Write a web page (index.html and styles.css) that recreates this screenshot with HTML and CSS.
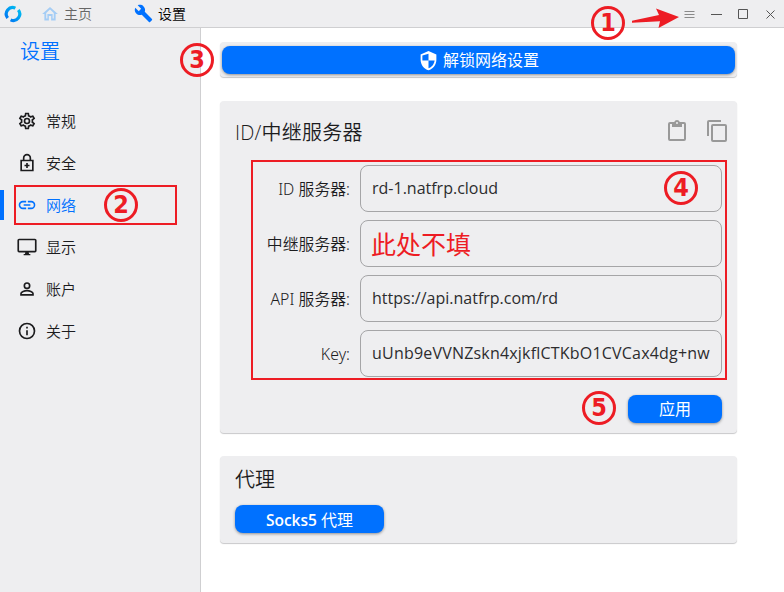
FILE: index.html
```html
<!DOCTYPE html>
<html lang="zh-CN">
<head>
<meta charset="utf-8">
<title>设置</title>
<link rel="stylesheet" href="styles.css">
</head>
<body>
<div class="window">
  <header class="titlebar">
    <svg class="logo" width="18" height="18" viewBox="0 0 18 18" fill="none" stroke-width="3.2">
      <defs><linearGradient id="lg" x1="1" y1="0" x2="0" y2="1"><stop offset="0" stop-color="#00c4f0"/><stop offset="1" stop-color="#0070f4"/></linearGradient></defs>
      <path d="M3.7 12.9A6.4 6.4 0 0 1 11.4 3.1M14.3 5.1A6.4 6.4 0 0 1 6.6 14.9" stroke="url(#lg)"/>
    </svg>
    <div class="tab home">
      <svg width="18" height="18" viewBox="0 0 24 24" fill="#a5cdf5"><path fill-rule="evenodd" d="M12 2.500 1.500 12h3v8.500h6v-6h3v6h6V12h3zM12 6l5 4.500V18h-1.500v-6h-7v6H7v-7.500z"/></svg>
      <span>主页</span>
    </div>
    <div class="tab active">
      <svg width="19" height="19" viewBox="0 0 24 24" fill="#0071ff"><path d="M22.700 19l-9.100-9.100c.9-2.300.4-5-1.500-6.900-2-2-5-2.400-7.400-1.300L9 6 6 9 1.600 4.700C.4 7.100.9 10.100 2.900 12.100c1.900 1.900 4.600 2.400 6.900 1.500l9.100 9.100c.4.4 1 .4 1.400 0l2.300-2.300c.5-.4.5-1.100.1-1.400z"/></svg>
      <span>设置</span>
    </div>
    <svg class="controls" width="100" height="27" viewBox="0 0 100 27" fill="none" stroke="#555">
      <path stroke="#8a8a8a" d="M4.500 11.500h10M4.500 14.500h10M4.500 17.500h10"/>
      <path d="M31 14.500h11M58.500 9.500h9v9h-9z"/>
      <path d="M86.500 10.500l8 8M94.500 10.500l-8 8"/>
    </svg>
  </header>
  <div class="body">
    <nav class="sidebar">
      <h1>设置</h1>
      <a><svg width="20" height="20" viewBox="0 0 24 24"><path d="M19.430 12.980c.04-.32.07-.64.07-.98s-.03-.66-.07-.98l2.110-1.650c.19-.15.24-.42.12-.64l-2-3.460a.5.5 0 0 0-.61-.22l-2.490 1c-.52-.4-1.080-.73-1.690-.98l-.38-2.650A.49.49 0 0 0 14 2h-4c-.25 0-.46.18-.49.42l-.38 2.650c-.61.25-1.170.59-1.690.98l-2.490-1a.5.5 0 0 0-.61.22l-2 3.460c-.13.22-.07.49.12.64l2.110 1.650c-.04.32-.07.65-.07.98s.03.66.07.98l-2.110 1.650c-.19.15-.24.42-.12.64l2 3.460c.12.220.390.290.610.220l2.490-1c.52.4 1.080.73 1.690.98l.38 2.650c.03.24.24.42.49.42h4c.25 0 .46-.18.49-.42l.38-2.650c.61-.25 1.170-.59 1.690-.98l2.490 1c.22.070.490 0 .610-.220l2-3.460c.12-.22.07-.49-.12-.64zM17.450 11.270c.04.31.05.52.05.73s-.02.43-.05.73l-.14 1.130.89.7 1.080.84-.7 1.210-1.270-.51-1.040-.42-.9.68c-.43.32-.84.56-1.250.73l-1.060.43-.16 1.130-.2 1.350h-1.400l-.35-2.480-1.060-.43c-.43-.18-.83-.41-1.230-.71l-.91-.7-1.060.43-1.270.51-.7-1.210 1.970-1.540-.14-1.130c-.03-.31-.05-.54-.05-.74s.02-.43.05-.73l.14-1.130L4.720 8.600l.7-1.210 1.270.51 1.040.42.9-.68c.43-.32.84-.56 1.250-.73l1.060-.43.16-1.130.2-1.350h1.390l.35 2.480 1.060.43c.43.18.83.41 1.230.71l.91.7 1.060-.43 1.270-.51.7 1.210-1.960 1.550zM12 8a4 4 0 1 0 0 8 4 4 0 0 0 0-8zm0 6a2 2 0 1 1 0-4 2 2 0 0 1 0 4z" fill-rule="evenodd"/></svg><span>常规</span></a>
      <a><svg class="line" width="20" height="20" viewBox="0 0 24 24"><path d="M5 9h14v12H5zM8 9V6a4 4 0 0 1 8 0v3M12 12v6M9 15h6"/></svg><span>安全</span></a>
      <a class="selected"><svg width="20" height="20" viewBox="0 0 24 24"><path d="M3.900 12c0-1.710 1.390-3.100 3.100-3.100h4V7H7a5 5 0 0 0 0 10h4v-1.900H7c-1.710 0-3.100-1.390-3.100-3.100zM8 13h8v-2H8zm9-6h-4v1.900h4a3.100 3.100 0 0 1 0 6.200h-4V17h4a5 5 0 0 0 0-10z"/></svg><span>网络</span></a>
      <a><svg width="20" height="20" viewBox="0 0 24 24"><path fill-rule="evenodd" d="M21.500 2h-19A2 2 0 0 0 .5 4v12.500a2 2 0 0 0 2 2H10l-.5 2H8V22h8v-1.500h-1.500l-.5-2h7.500a2 2 0 0 0 2-2V4a2 2 0 0 0-2-2zm0 14.500h-19V4h19z"/></svg><span>显示</span></a>
      <a><svg class="line" width="20" height="20" viewBox="0 0 24 24"><circle cx="12" cy="8" r="3.200"/><path d="M4.800 19v-1.600c0-2 4.300-3.400 7.200-3.400s7.200 1.400 7.200 3.400V19z"/></svg><span>账户</span></a>
      <a><svg class="line" width="20" height="20" viewBox="0 0 24 24"><circle cx="12" cy="12" r="9"/><path d="M12 11v6M12 7v2"/></svg><span>关于</span></a>
    </nav>
    <main class="content">
      <section class="card unlock">
        <button class="wide"><svg width="21" height="21" viewBox="0 0 24 24" fill="#fff"><path fill-rule="evenodd" d="M12 1 3 5v6c0 5.550 3.840 10.740 9 12 5.160-1.260 9-6.450 9-12V5zm0 3.200V12h7c-.53 4.100-3.300 7.800-7 8.900V12H5V6.300z"/></svg><span>解锁网络设置</span></button>
      </section>
      <section class="card server">
        <div class="head">
          <h2>ID/中继服务器</h2>
          <svg width="24" height="26" viewBox="0 0 24 24" fill="#999"><path fill-rule="evenodd" d="M19 3h-4.200a3 3 0 0 0-5.600 0H5a2 2 0 0 0-2 2v15a2 2 0 0 0 2 2h14a2 2 0 0 0 2-2V5a2 2 0 0 0-2-2zm0 17H5V5h2v3h10V5h2zM12 3a1 1 0 1 1 0 2 1 1 0 0 1 0-2z"/></svg>
          <svg width="24" height="24" viewBox="0 0 24 24" fill="#999"><path fill-rule="evenodd" d="M16 1H4a2 2 0 0 0-2 2v14h2V3h12zM20 5H8a2 2 0 0 0-2 2v14a2 2 0 0 0 2 2h12a2 2 0 0 0 2-2V7a2 2 0 0 0-2-2zm0 16H8V7h12z"/></svg>
        </div>
        <div class="form">
          <div class="row"><label>ID 服务器:</label><div class="field">rd-1.natfrp.cloud</div></div>
          <div class="row"><label>中继服务器:</label><div class="field note">此处不填</div></div>
          <div class="row"><label>API 服务器:</label><div class="field">https://api.natfrp.com/rd</div></div>
          <div class="row"><label>Key:</label><div class="field key">uUnb9eVVNZskn4xjkflCTKbO1CVCax4dg+nw</div></div>
        </div>
        <button class="apply">应用</button>
      </section>
      <section class="card proxy">
        <h2>代理</h2>
        <button class="socks"><span><b>Socks5</b> 代理</span></button>
      </section>
    </main>
  </div>
  <div class="menu-mark"></div>
  <svg class="arrow" width="48" height="22" viewBox="0 0 48 22"><path fill="#ed1c24" d="M0 12.800 27 7l-3-6.500L47 9 26.500 20l1.500-6.700L0 14.800z"/></svg>
  <b class="step s1">1</b><b class="step s2">2</b><b class="step s3">3</b><b class="step s4">4</b><b class="step s5">5</b>
</div>
</body>
</html>
```

FILE: styles.css
```css
* { box-sizing: border-box; }
body { margin: 0; font: 350 15px/20px "Open Sans", "Noto Sans CJK SC", sans-serif; color: #1c1c1e; }
h1, h2 { margin: 0; font-weight: 350; font-size: 20px; line-height: 28px; }
.window { position: relative; width: 784px; height: 592px; display: flex; flex-direction: column; overflow: hidden; background: #fff; }
.titlebar { height: 28px; flex: none; display: flex; align-items: center; background: #eeeef0; border-bottom: 1px solid #cfcfd1; font-size: 14px; }
.logo { margin-left: 4px; }
.tab { display: flex; align-items: center; }
.home { margin-left: 19px; width: 93px; gap: 5px; color: #666; }
.active { gap: 5px; color: #000; }
.controls { margin-left: auto; margin-right: 4px; }
.body { flex: 1; display: flex; }
.sidebar { width: 201px; background: #eeeef0; border-right: 1px solid #cfcfd1; }
.sidebar h1 { margin: 10px 0 34px 20px; color: #0071ff; }
.sidebar a { height: 42px; display: flex; align-items: center; gap: 9px; padding-left: 17px; }
.sidebar svg { fill: #1c1c1e; }
.sidebar svg.line { fill: none; stroke: #1c1c1e; stroke-width: 2; }
.sidebar .selected { color: #0071ff; background: linear-gradient(#0071ff, #0071ff) 0 6px / 4px 30px no-repeat; }
.sidebar .selected svg { fill: #0071ff; }
.content { flex: 1; padding: 14px 47px 0 19px; }
.card { background: #eeeef0; border-radius: 4px; box-shadow: 0 1px 1px #c8c8ca; }
.unlock { height: 35px; padding: 4px 2px; margin-bottom: 24px; }
button { height: 28px; padding: 0; border: 0; border-radius: 8px; background: #0071ff; color: #fff; font: 400 16px/28px "Open Sans", "Noto Sans CJK SC", sans-serif; box-shadow: 0 1px 3px #0006; display: flex; justify-content: center; align-items: center; }
.wide { width: 100%; gap: 4px; }
.server { height: 332px; padding: 17px 8px 0 15px; }
.head { height: 26px; display: flex; align-items: center; gap: 16px; }
.head h2 { flex: 1; padding-top: 4px; letter-spacing: 0.2px; }
.form { width: 476px; height: 220px; margin: 16px 0 0 16px; padding: 3px 3px 0 8px; border: 2px solid #ed1c24; display: flex; flex-direction: column; gap: 8px; }
.row { height: 47px; display: flex; align-items: center; justify-content: space-between; }
.row label { width: 89px; display: flex; justify-content: flex-end; white-space: pre; font-family: "Noto Sans", "Noto Sans CJK SC", sans-serif; font-size: 15.800px; letter-spacing: 0.050px; margin-top: 1px; }
.field { width: 362px; height: 47px; padding-left: 11px; border: 1px solid #a5a5a7; border-radius: 8px; font-size: 16px; font-weight: 400; line-height: 44px; white-space: nowrap; color: #2c2c2e; }
.key { letter-spacing: 0.200px; }
.note { color: #ed1c24; font-size: 25px; padding-left: 10px; line-height: 46px; }
.apply { width: 94px; margin: 15px 0 0 393px; }
.proxy { height: 87px; margin-top: 23px; padding: 10px 15px; }
.socks { width: 149px; margin-top: 11px; }
.socks span { padding-top: 1px; }
.socks b { font-size: 15.500px; font-weight: 600; }
.menu-mark { position: absolute; left: 14px; top: 185px; width: 163px; height: 40px; border: 2px solid #ed1c24; }
.arrow { position: absolute; left: 632px; top: 8px; }
.step { position: absolute; width: 34px; height: 34px; border: 3px solid #ed1c24; border-radius: 50%; color: #ed1c24; font: 700 25px/28px "DejaVu Sans Condensed", "DejaVu Sans", sans-serif; text-align: center; }
.s1 { left: 591px; top: 6px; }
.s2 { left: 104px; top: 188px; }
.s3 { left: 180px; top: 43px; }
.s4 { left: 664px; top: 171px; }
.s5 { left: 582px; top: 391px; }
```
